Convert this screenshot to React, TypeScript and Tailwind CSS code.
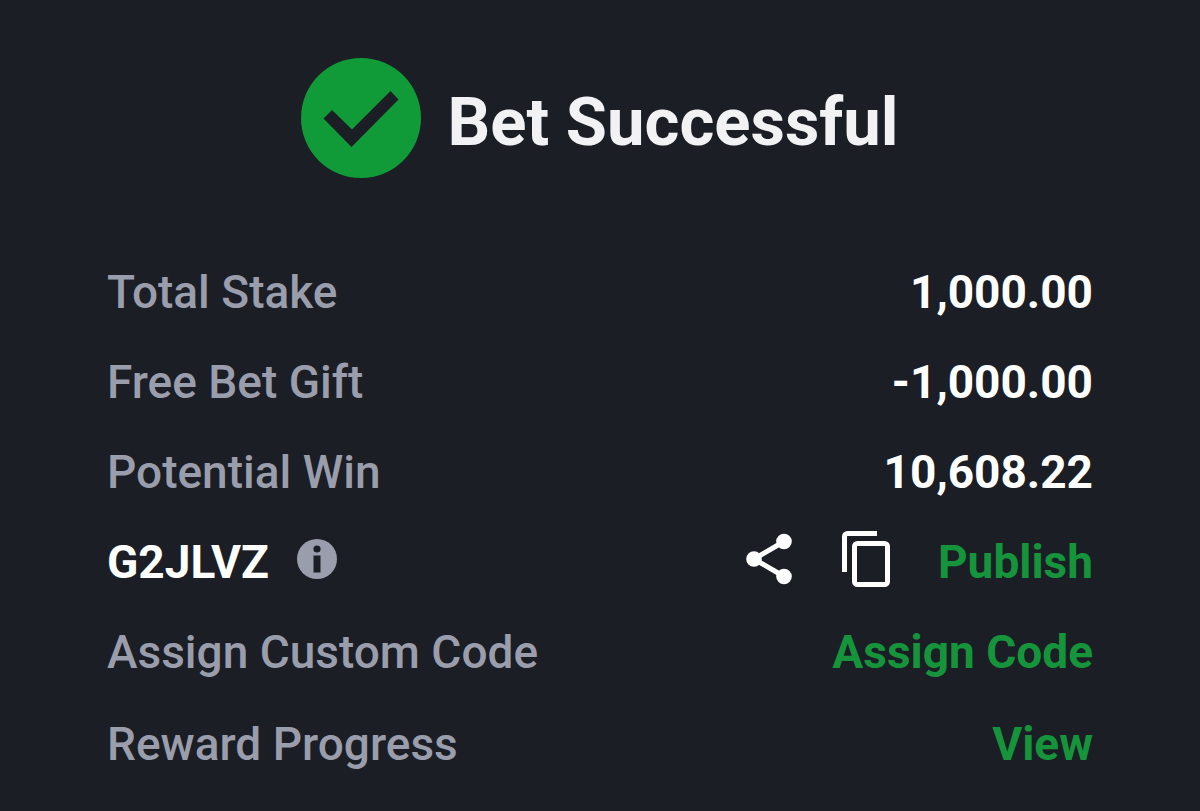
import React from 'react';

const amounts = [
  { label: 'Total Stake', value: '1,000.00' },
  { label: 'Free Bet Gift', value: '-1,000.00' },
  { label: 'Potential Win', value: '10,608.22' },
];

const actions = [
  { label: 'Assign Custom Code', action: 'Assign Code' },
  { label: 'Reward Progress', action: 'View' },
];

const CheckIcon: React.FC = () => (
  <svg viewBox="0 0 120 120" className="size-30 shrink-0" aria-hidden="true">
    <circle cx="60" cy="60" r="60" fill="#109b38" />
    <path d="M22.5 60.5L31 52L51 71.5L89.5 33L97.5 41.5L50.5 89z" fill="#1b1e25" />
  </svg>
);

const InfoIcon: React.FC = () => (
  <svg viewBox="0 0 40 40" className="size-10" aria-hidden="true">
    <circle cx="20" cy="20" r="20" fill="#9a9dab" />
    <circle cx="20" cy="10" r="3.6" fill="#1b1e25" />
    <rect x="16.5" y="16.5" width="7" height="17" fill="#1b1e25" />
  </svg>
);

const ShareIcon: React.FC = () => (
  <svg viewBox="0 0 48 52" className="h-13 w-12" aria-hidden="true">
    <path d="M38 8.5L8 26L38 43.5" fill="none" stroke="#fff" strokeWidth="5" />
    <circle cx="38" cy="8.5" r="7.8" fill="#fff" />
    <circle cx="8" cy="26" r="7.8" fill="#fff" />
    <circle cx="38" cy="43.5" r="7.8" fill="#fff" />
  </svg>
);

const CopyIcon: React.FC = () => (
  <svg viewBox="0 0 48 56" className="h-14 w-12" fill="none" stroke="#fff" strokeWidth="5" aria-hidden="true">
    <path d="M2.5 41V5.5a3 3 0 0 1 3-3H35" />
    <rect x="12.5" y="12.5" width="33" height="41" rx="3" />
  </svg>
);

const App: React.FC = () => {
  return (
    <main className="min-h-screen bg-[#1b1e25] px-[107px] pt-[58px] font-['Roboto',sans-serif] text-[46px] leading-[60px] font-medium text-[#9a9dab]">
      <header className="flex items-center justify-center gap-[26px]">
        <CheckIcon />
        <h1 className="pt-2 text-[67px] leading-[80px] font-bold text-[#f2f2f5]">Bet Successful</h1>
      </header>

      <section className="mt-21 flex flex-col gap-[30px]">
        {amounts.map((row) => (
          <div key={row.label} className="flex items-center justify-between">
            <span>{row.label}</span>
            <span className="font-bold text-white">{row.value}</span>
          </div>
        ))}

        <div className="flex h-[60px] items-center justify-between">
          <div className="flex items-center gap-7">
            <span className="font-bold text-white">G2JLVZ</span>
            <button type="button" aria-label="Booking code info" className="pb-1.5">
              <InfoIcon />
            </button>
          </div>
          <div className="flex items-center gap-12">
            <button type="button" aria-label="Share" className="pb-1.5">
              <ShareIcon />
            </button>
            <button type="button" aria-label="Copy code" className="pb-1.5">
              <CopyIcon />
            </button>
            <button type="button" className="font-bold text-[#16943b]">Publish</button>
          </div>
        </div>

        <div className="flex flex-col gap-8">
          {actions.map((row) => (
            <div key={row.label} className="flex items-center justify-between">
              <span>{row.label}</span>
              <button type="button" className="font-bold text-[#16943b]">{row.action}</button>
            </div>
          ))}
        </div>
      </section>
    </main>
  );
};

export default App;
